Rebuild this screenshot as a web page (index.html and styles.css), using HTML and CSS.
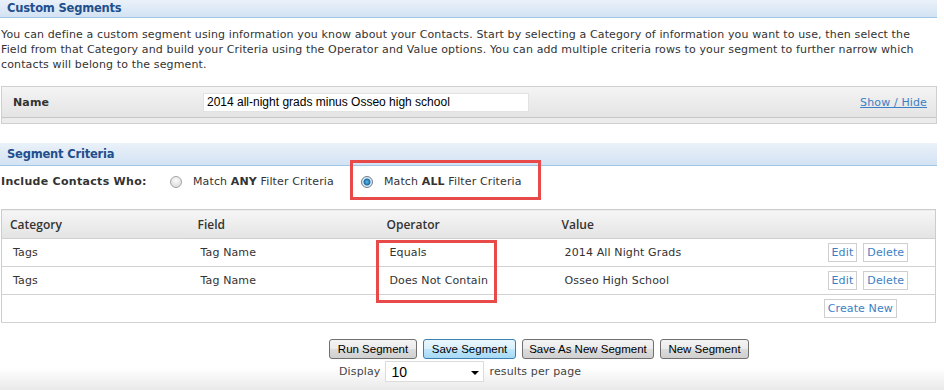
FILE: index.html
```html
<!DOCTYPE html>
<html>

<head>
	<title>Custom Segments</title>
	<link rel="stylesheet" href="styles.css">
</head>

<body>
	<div class="page">
		<h2 class="section-head first">Custom Segments</h2>
		<p class="intro">You can define a custom segment using information you know about your Contacts. Start by selecting a Category of information you want to use, then select the Field from that Category and build your Criteria using the Operator and Value options. You can add multiple criteria rows to your segment to further narrow which contacts will belong to the segment.</p>

		<div class="name-panel">
			<div class="name-row">
				<label class="name-label">Name</label>
				<input class="name-input" type="text" value="2014 all-night grads minus Osseo high school">
				<a class="toggle-link" href="#">Show / Hide</a>
			</div>
			<div class="name-foot"></div>
		</div>

		<h2 class="section-head">Segment Criteria</h2>
		<div class="match-row">
			<span class="match-label">Include Contacts Who:</span>
			<label class="match-option"><input type="radio" name="match" class="radio"><span>Match <b>ANY</b> Filter Criteria</span></label>
			<label class="match-option all"><input type="radio" name="match" class="radio" checked><span>Match <b>ALL</b> Filter Criteria</span></label>
		</div>

		<table class="criteria">
			<colgroup>
				<col class="col-cat">
				<col class="col-field">
				<col class="col-op">
				<col class="col-value">
				<col>
			</colgroup>
			<thead>
				<tr>
					<th>Category</th>
					<th>Field</th>
					<th>Operator</th>
					<th>Value</th>
					<th></th>
				</tr>
			</thead>
			<tbody>
				<tr>
					<td>Tags</td>
					<td>Tag Name</td>
					<td>Equals</td>
					<td>2014 All Night Grads</td>
					<td class="row-actions"><a class="mini-btn" href="#">Edit</a><a class="mini-btn" href="#">Delete</a></td>
				</tr>
				<tr>
					<td>Tags</td>
					<td>Tag Name</td>
					<td>Does Not Contain</td>
					<td>Osseo High School</td>
					<td class="row-actions"><a class="mini-btn" href="#">Edit</a><a class="mini-btn" href="#">Delete</a></td>
				</tr>
				<tr class="create-row">
					<td colspan="5"><a class="mini-btn" href="#">Create New</a></td>
				</tr>
			</tbody>
		</table>

		<div class="actions">
			<button class="btn btn-run">Run Segment</button>
			<button class="btn btn-save active">Save Segment</button>
			<button class="btn btn-save-new">Save As New Segment</button>
			<button class="btn btn-new">New Segment</button>
		</div>
		<div class="paging">
			<span>Display</span>
			<div class="fake-select"><span>10</span><span class="caret"></span></div>
			<span>results per page</span>
		</div>

		<!-- review highlights -->
		<div class="highlight hl-match"></div>
		<div class="highlight hl-operator"></div>
	</div>
</body>

</html>
```

FILE: styles.css
```css
body {
	margin: 0;
	padding: 0;
	min-height: 390px;
	font-family: "DejaVu Sans", Verdana, sans-serif;
	font-size: 11px;
	letter-spacing: 0.13px;
	color: #333;
	background: linear-gradient(to bottom, #fff 368px, #e9e9e9 390px);
}

.page {
	position: relative;
	width: 937px;
}

.section-head {
	margin: 0;
	height: 22px;
	padding-left: 7px;
	line-height: 23px;
	font-size: 11.5px;
	font-weight: bold;
	letter-spacing: -0.2px;
	color: #1f4f8d;
	background: linear-gradient(to bottom, #eaf1f9, #d3e3f3);
	border-bottom: 1px solid #9fc5e7;
}

.section-head.first {
	height: 17px;
	line-height: 17px;
}

.intro {
	margin: 9px 0 0 1px;
	line-height: 15px;
}

.name-panel {
	margin: 14px 0 0 1px;
	border: 1px solid #cfcfcf;
	background: #e9e9e9;
}

.name-row {
	display: flex;
	align-items: center;
	height: 30px;
	padding: 0 9px 0 11px;
	background: linear-gradient(to bottom, #f4f4f4, #e4e4e4);
	border-bottom: 1px solid #c6c6c6;
}

.name-foot {
	height: 5px;
	background: #ececec;
}

.name-label {
	width: 190px;
	font-weight: bold;
	color: #333;
}

.name-input {
	width: 318px;
	height: 17px;
	padding: 0 3px;
	margin: 0;
	border: 1px solid #e2e2e2;
	font-family: "Liberation Sans", Arial, sans-serif;
	font-size: 12px;
	letter-spacing: 0;
	color: #000;
	background: #fff;
}

.toggle-link {
	margin-left: auto;
	color: #3b7fc4;
}

.name-panel + .section-head {
	margin-top: 19px;
}

.match-row {
	display: flex;
	align-items: center;
	height: 30px;
}

.match-label {
	font-weight: bold;
	letter-spacing: 0.3px;
	width: 169px;
	padding-left: 1px;
}

.match-option {
	display: flex;
	align-items: center;
}

.match-option.all {
	margin-left: 27px;
}

.radio {
	appearance: none;
	width: 12px;
	height: 12px;
	margin: 2px 11px 0 0;
	border: 1px solid #a3a3a3;
	border-radius: 50%;
	background: radial-gradient(circle at 50% 35%, #fafafa, #d6d6d6);
}

.radio:checked {
	border-color: #6b7f93;
	background: radial-gradient(circle, #5cc0f0 0, #1c6aa8 3px, #e8eef3 4px, #cfd6dc 6px);
}

.criteria {
	margin: 13px 0 0 1px;
	width: 935px;
	border-collapse: collapse;
	table-layout: fixed;
	border: 1px solid #cccccc;
}

.col-cat {
	width: 188px;
}

.col-field {
	width: 189px;
}

.col-op {
	width: 175px;
}

.col-value {
	width: 262px;
}

.criteria th {
	height: 28px;
	padding: 0 0 0 8px;
	text-align: left;
	font-family: "Open Sans", sans-serif;
	font-weight: 600;
	font-size: 12px;
	letter-spacing: 0;
	color: #333;
	background: linear-gradient(to bottom, #f6f6f6, #e3e3e3);
	border-bottom: 1px solid #cfcfcf;
}

.criteria td {
	height: 27px;
	padding: 0 0 0 11px;
	border-bottom: 1px solid #d2d2d2;
	white-space: nowrap;
}

.criteria .row-actions {
	padding-left: 12px;
}

.mini-btn {
	display: inline-block;
	height: 17px;
	line-height: 17px;
	padding: 0 3px;
	margin-right: 6px;
	border: 1px solid #cfcfcf;
	color: #3b7fc4;
	text-decoration: none;
	background: #fff;
}

.create-row td {
	text-align: right;
	padding-right: 32px;
}

.actions {
	display: flex;
	gap: 6px;
	margin: 16px 0 0 329px;
}

.btn {
	height: 20px;
	padding: 0;
	font-family: "Liberation Sans", Arial, sans-serif;
	font-size: 11.5px;
	letter-spacing: 0;
	color: #000;
	border: 1px solid #707070;
	border-radius: 3px;
	background: linear-gradient(to bottom, #f3f3f3 0%, #ebebeb 50%, #dcdcdc 51%, #d0d0d0 100%);
}

.btn.active {
	border-color: #3c7fb1;
	background: linear-gradient(to bottom, #eaf6fd 0%, #d9f0fc 50%, #bee6fd 51%, #a7d9f5 100%);
}

.btn-run {
	width: 88px;
}

.btn-save {
	width: 93px;
}

.btn-save-new {
	width: 132px;
}

.btn-new {
	width: 89px;
}

.paging {
	display: flex;
	align-items: center;
	gap: 5px;
	margin: 2px 0 0 339px;
	color: #444;
}

.fake-select {
	display: flex;
	align-items: center;
	justify-content: space-between;
	width: 88px;
	height: 19px;
	padding: 0 4px 0 5px;
	border: 1px solid #dcdcdc;
	background: #fff;
	font-family: "Liberation Sans", Arial, sans-serif;
	font-size: 14px;
	letter-spacing: 0;
	color: #000;
}

.caret {
	width: 0;
	height: 0;
	margin-top: 3px;
	border-left: 4px solid transparent;
	border-right: 4px solid transparent;
	border-top: 4px solid #000;
}

.highlight {
	position: absolute;
	border: 3px solid #e84a4a;
}

.hl-match {
	left: 350px;
	top: 160px;
	width: 185px;
	height: 34px;
}

.hl-operator {
	left: 376px;
	top: 240px;
	width: 115px;
	height: 57px;
}
```
